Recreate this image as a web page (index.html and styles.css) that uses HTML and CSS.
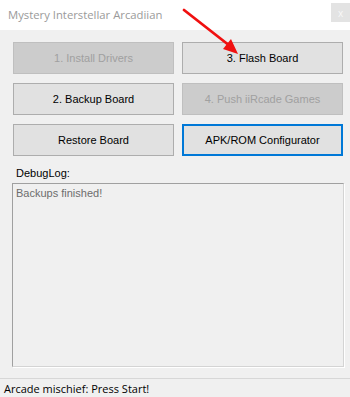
FILE: index.html
```html
<!DOCTYPE html>
<html lang="en">
<head>
    <meta charset="UTF-8">
    <meta name="viewport" content="width=device-width, initial-scale=1.0">
    <title>Mystery Interstellar Arcadiian</title>
    <link rel="stylesheet" href="styles.css">
</head>
<body>
    <div class="window">
        <header class="titleBar">
            <span class="title">Mystery Interstellar Arcadiian</span>
            <span class="closeBtn">x</span>
        </header>
        <main class="content">
            <section class="buttons">
                <button class="btn" disabled>1. Install Drivers</button>
                <button class="btn">3. Flash Board</button>
                <button class="btn">2. Backup Board</button>
                <button class="btn" disabled>4. Push iiRcade Games</button>
                <button class="btn">Restore Board</button>
                <button class="btn focused">APK/ROM Configurator</button>
            </section>
            <label class="logLabel" for="debugLog">DebugLog:</label>
            <div class="logBox" id="debugLog">Backups finished!</div>
        </main>
        <footer class="statusBar">Arcade mischief: Press Start!</footer>
        <!-- red annotation arrow drawn on top of the screenshot -->
        <svg class="arrow" width="80" height="60" viewBox="0 0 80 60">
            <line x1="3" y1="10" x2="49" y2="46" stroke="#f01010" stroke-width="2.8" stroke-linecap="round"/>
            <polygon points="57,54 42,49 50,39" fill="#f01010"/>
        </svg>
    </div>
</body>
</html>
```

FILE: styles.css
```css
* {
    box-sizing: border-box;
}
body {
    margin: 0;
    background: #f0f0f0;
    font-family: "Liberation Sans", Arial, sans-serif;
    font-size: 11px;
}
.window {
    position: relative;
    width: 350px;
    height: 397px;
    display: flex;
    flex-direction: column;
}
.titleBar {
    height: 30px;
    background: #ffffff;
    display: flex;
    align-items: center;
    justify-content: space-between;
    padding-left: 8px;
}
.title {
    font-family: "Open Sans", sans-serif;
    font-size: 11.3px;
    color: #9a9a9a;
    margin-top: -2px;
}
.closeBtn {
    width: 19px;
    height: 19px;
    margin-top: -5px;
    background: #e3e3e3;
    color: #f8f8f8;
    font-family: "Open Sans", sans-serif;
    font-size: 10px;
    display: flex;
    align-items: center;
    justify-content: center;
}
.content {
    flex: 1;
    padding: 12px 7px 0 12px;
    display: flex;
    flex-direction: column;
}
.buttons {
    display: grid;
    grid-template-columns: 161px 161px;
    grid-auto-rows: 32px;
    column-gap: 8px;
    row-gap: 9px;
    margin-left: 1px;
}
.btn {
    font-family: "Liberation Sans", Arial, sans-serif;
    font-size: 11px;
    color: #000000;
    background: #e1e1e1;
    border: 1px solid #adadad;
    padding: 0;
}
.btn:disabled {
    background: #cccccc;
    border-color: #bfbfbf;
    color: #a0a0a0;
}
.btn.focused {
    border: 2px solid #0078d7;
}
.logLabel {
    margin: 10px 0 0 4px;
    height: 17px;
    line-height: 14px;
    color: #000000;
}
.logBox {
    width: 332px;
    height: 184px;
    border: 1px solid #a0a0a0;
    border-right-color: #d4d4d4;
    border-bottom-color: #d4d4d4;
    box-shadow: 1px 1px 0 #ffffff;
    background: #f0f0f0;
    color: #6d6d6d;
    padding: 3px 3px;
}
.statusBar {
    height: 19px;
    border-top: 1px solid #d7d7d7;
    padding: 2px 0 0 4px;
    color: #000000;
    font-family: "Open Sans", sans-serif;
    font-size: 11px;
    line-height: 15px;
}
.arrow {
    position: absolute;
    left: 181px;
    top: 0;
}
```
